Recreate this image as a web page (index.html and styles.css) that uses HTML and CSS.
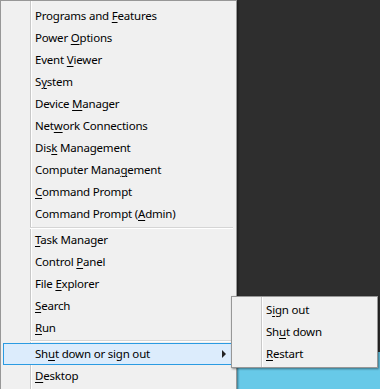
FILE: index.html
```html
<!DOCTYPE html>
<html>
<head>
<meta charset="utf-8">
<link rel="stylesheet" href="styles.css">
</head>
<body>
<div class="menu main">
  <div class="item">Programs and <u>F</u>eatures</div>
  <div class="item">Power <u>O</u>ptions</div>
  <div class="item">Event <u>V</u>iewer</div>
  <div class="item">S<u>y</u>stem</div>
  <div class="item">Device <u>M</u>anager</div>
  <div class="item">Net<u>w</u>ork Connections</div>
  <div class="item">Dis<u>k</u> Management</div>
  <div class="item">Computer Mana<u>g</u>ement</div>
  <div class="item"><u>C</u>ommand Prompt</div>
  <div class="item">Command Prompt (<u>A</u>dmin)</div>
  <div class="sep"></div>
  <div class="item"><u>T</u>ask Manager</div>
  <div class="item">Control <u>P</u>anel</div>
  <div class="item">File <u>E</u>xplorer</div>
  <div class="item"><u>S</u>earch</div>
  <div class="item"><u>R</u>un</div>
  <div class="sep sep2"></div>
  <div class="item active">Sh<u>u</u>t down or sign out<span class="arrow"></span></div>
  <div class="item"><u>D</u>esktop</div>
</div>
<div class="menu sub">
  <div class="item">S<u>i</u>gn out</div>
  <div class="item">Sh<u>u</u>t down</div>
  <div class="item"><u>R</u>estart</div>
</div>
</body>
</html>
```
FILE: styles.css
```css
html, body {
  margin: 0;
  padding: 0;
}
body {
  width: 380px;
  height: 389px;
  overflow: hidden;
  position: relative;
  background:
    linear-gradient(#67c9e8, #67c9e8) 237px 352px / 143px 37px no-repeat,
    #2e2e2e;
  font-family: "Segoe UI", "Noto Sans", "Open Sans", sans-serif;
  font-size: 11.5px;
  letter-spacing: -0.2px;
  color: #000;
}
.menu {
  box-sizing: border-box;
  border: 1px solid #979797;
  background:
    linear-gradient(to right, transparent 29px, #c8c8c8 29px, #c8c8c8 30px, #ffffff 30px, #ffffff 31px, transparent 31px),
    #f0f0f0;
  box-shadow: 1px 1px 2px rgba(0, 0, 0, 0.45);
}
.main {
  width: 237px;
  height: 400px;
  padding: 4px 3px 2px 2px;
}
.item {
  position: relative;
  height: 22px;
  line-height: 22px;
  padding-left: 32px;
  white-space: nowrap;
}
.item u {
  text-decoration: underline;
  text-underline-offset: 2px;
  text-decoration-thickness: 1px;
}
.sep {
  height: 4px;
  margin-left: 27px;
  background: linear-gradient(to bottom, transparent 2px, #d5d5d5 2px, #d5d5d5 3px, #ffffff 3px, #ffffff 4px);
}
.sep2 {
  background: linear-gradient(to bottom, transparent 1px, #d5d5d5 1px, #d5d5d5 2px, #ffffff 2px, #ffffff 3px, transparent 3px);
}
.active {
  border: 1px solid #2b9be2;
  background: #dcecfc;
  height: 20px;
  line-height: 20px;
  padding-left: 31px;
  margin-right: -4px;
}
.arrow {
  position: absolute;
  left: 218px;
  top: 6px;
  width: 0;
  height: 0;
  border-top: 4px solid transparent;
  border-bottom: 4px solid transparent;
  border-left: 4px solid #222;
}
.sub {
  position: absolute;
  left: 231px;
  top: 296px;
  width: 147px;
  height: 72px;
  padding: 2px 2px;
}
```
